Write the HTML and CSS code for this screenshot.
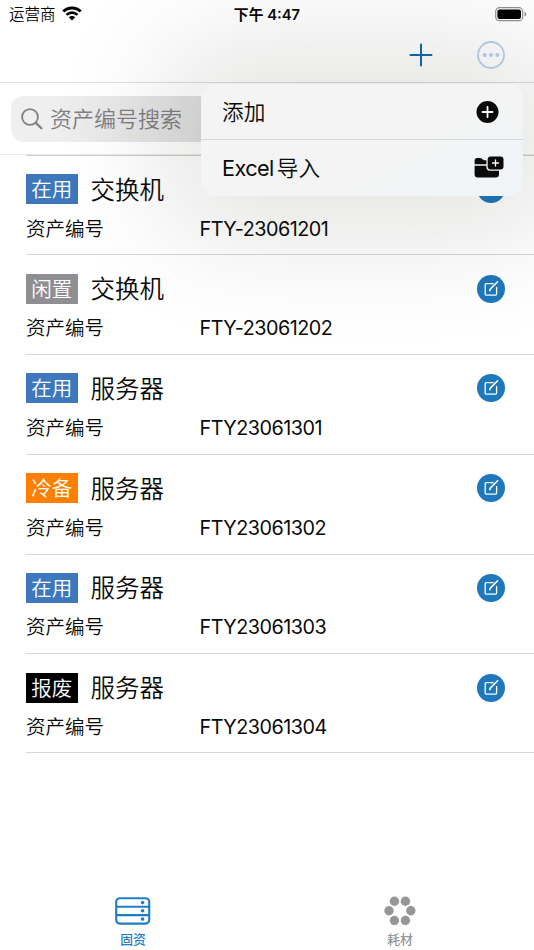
FILE: index.html
```html
<!DOCTYPE html>
<html lang="zh-CN">
<head>
    <meta charset="UTF-8">
    <meta name="viewport" content="width=device-width, initial-scale=1.0">
    <title>固资</title>
    <link rel="stylesheet" href="styles.css">
</head>
<body>
    <svg class="icon-defs" aria-hidden="true">
        <symbol id="icon-edit" viewBox="0 0 28 28">
            <circle cx="14" cy="14" r="14" fill="#1e78bb"/>
            <path d="M16.5 8.7H9.2a1 1 0 0 0-1 1v9.4a1 1 0 0 0 1 1h9.4a1 1 0 0 0 1-1V12" fill="none" stroke="#fff" stroke-width="1.3"/>
            <path d="M12.8 15.6l.6-1.6 7.2-7.2" fill="none" stroke="#fff" stroke-width="1.6" stroke-linecap="round"/>
        </symbol>
    </svg>

    <div class="screen">
        <header class="status-bar">
            <div class="carrier">
                <span>运营商</span>
                <svg class="wifi" viewBox="0 0 20 15">
                    <path d="M1.3 5.5a12.4 12.4 0 0 1 17.4 0" fill="none" stroke="#000" stroke-width="2.9"/>
                    <path d="M4.5 8.9a7.8 7.8 0 0 1 11 0" fill="none" stroke="#000" stroke-width="2.7"/>
                    <path d="M10 14.4l-3.1-3.1a4.4 4.4 0 0 1 6.2 0z"/>
                </svg>
            </div>
            <div class="time">下午 4:47</div>
            <svg class="battery" viewBox="0 0 32 15">
                <rect x=".7" y=".7" width="27" height="13" rx="3.8" fill="none" stroke="#929292" stroke-width="1.2"/>
                <rect x="2.4" y="2.4" width="23.6" height="9.6" rx="2.2"/>
                <path d="M29.5 4.8q1.8.7 1.8 2.4t-1.8 2.4z" fill="#929292"/>
            </svg>
        </header>

        <nav class="nav-bar">
            <button class="nav-button" aria-label="添加">
                <svg viewBox="0 0 28 28"><path d="M14 3.5v21M3.5 14h21" stroke="#1269ad" stroke-width="2" stroke-linecap="round"/></svg>
            </button>
            <button class="nav-button" aria-label="更多">
                <svg viewBox="0 0 28 28">
                    <circle cx="14" cy="14" r="13" fill="none" stroke="#bad2ee" stroke-width="1.8"/>
                    <g fill="#bad2ee"><circle cx="7.7" cy="14" r="2"/><circle cx="14" cy="14" r="2"/><circle cx="20.3" cy="14" r="2"/></g>
                </svg>
            </button>
        </nav>

        <div class="search-area">
            <div class="search-field">
                <svg viewBox="0 0 22 22"><circle cx="9" cy="9" r="7.9" fill="none" stroke="#808084" stroke-width="1.8"/><path d="M14.9 14.9l5.4 5.4" stroke="#808084" stroke-width="2.3" stroke-linecap="round"/></svg>
                <span>资产编号搜索</span>
            </div>
        </div>

        <main class="asset-list">
            <article class="asset">
                <div class="asset-head"><span class="tag in-use">在用</span><h2>交换机</h2><svg class="edit"><use href="#icon-edit"/></svg></div>
                <div class="asset-info"><span>资产编号</span><span class="code">FTY-23061201</span></div>
            </article>
            <article class="asset">
                <div class="asset-head"><span class="tag idle">闲置</span><h2>交换机</h2><svg class="edit"><use href="#icon-edit"/></svg></div>
                <div class="asset-info"><span>资产编号</span><span class="code">FTY-23061202</span></div>
            </article>
            <article class="asset">
                <div class="asset-head"><span class="tag in-use">在用</span><h2>服务器</h2><svg class="edit"><use href="#icon-edit"/></svg></div>
                <div class="asset-info"><span>资产编号</span><span class="code">FTY23061301</span></div>
            </article>
            <article class="asset">
                <div class="asset-head"><span class="tag standby">冷备</span><h2>服务器</h2><svg class="edit"><use href="#icon-edit"/></svg></div>
                <div class="asset-info"><span>资产编号</span><span class="code">FTY23061302</span></div>
            </article>
            <article class="asset">
                <div class="asset-head"><span class="tag in-use">在用</span><h2>服务器</h2><svg class="edit"><use href="#icon-edit"/></svg></div>
                <div class="asset-info"><span>资产编号</span><span class="code">FTY23061303</span></div>
            </article>
            <article class="asset">
                <div class="asset-head"><span class="tag scrapped">报废</span><h2>服务器</h2><svg class="edit"><use href="#icon-edit"/></svg></div>
                <div class="asset-info"><span>资产编号</span><span class="code">FTY23061304</span></div>
            </article>
        </main>

        <footer class="tab-bar">
            <div class="tab active">
                <svg viewBox="0 0 36 28">
                    <g fill="none" stroke="currentColor" stroke-width="2.1"><rect x="1.2" y="1.2" width="33" height="25.4" rx="3.5"/><path d="M1.2 9.7h33M1.2 18.1h33"/></g>
                    <g fill="currentColor"><circle cx="27.6" cy="5.6" r="1.8"/><circle cx="27.6" cy="13.8" r="1.8"/><circle cx="27.6" cy="22.1" r="1.8"/></g>
                </svg>
                <span>固资</span>
            </div>
            <div class="tab">
                <svg viewBox="0 0 36 28">
                    <g fill="currentColor"><circle cx="12.4" cy="4.2" r="4.7"/><circle cx="23.4" cy="4.2" r="4.7"/><circle cx="7" cy="13.8" r="4.7"/><circle cx="28.8" cy="13.8" r="4.7"/><circle cx="12.4" cy="23.5" r="4.7"/><circle cx="23.4" cy="23.5" r="4.7"/></g>
                </svg>
                <span>耗材</span>
            </div>
        </footer>

        <!-- Context menu -->
        <div class="menu">
            <div class="menu-item">
                <span>添加</span>
                <svg viewBox="0 0 30 24"><circle cx="13.5" cy="12" r="11" fill="#0a0a0a"/><path d="M13.5 7v10M8.5 12h10" stroke="#fff" stroke-width="1.8" stroke-linecap="round"/></svg>
            </div>
            <div class="menu-item">
                <span><span class="latin">Excel</span>导入</span>
                <svg viewBox="0 0 30 24">
                    <path d="M.6 8.3V4.6q0-2.6 2.6-2.6h2.7q1.2 0 2 .8l1.2 1q.5.4 1.3.4h2v4.1z" fill="#0a0a0a"/>
                    <path d="M.6 9.7h11.8v1.6q0 3.4 3.4 3.4h9.2v3.6q0 3.3-3.3 3.3H3.9q-3.3 0-3.3-3.3z" fill="#0a0a0a"/>
                    <rect x="13.7" y=".6" width="15.8" height="12.8" rx="3" fill="#0a0a0a"/>
                    <path d="M21.5 4v6M18.5 7h6" stroke="#fff" stroke-width="1.3" stroke-linecap="round"/>
                </svg>
            </div>
        </div>
    </div>
</body>
</html>
```
FILE: styles.css
```css
:root {
    --blue: #1e7dc4;
    --line: #dededf;
    --font-body: Inter, "Noto Sans CJK SC", sans-serif;
}
* { margin: 0; padding: 0; box-sizing: border-box; }
body { font-family: var(--font-body); font-weight: 350; background: #fff; color: #0a0a0a; }
.icon-defs { position: absolute; width: 0; height: 0; }
.screen { position: relative; width: 534px; height: 950px; overflow: hidden; display: flex; flex-direction: column; }

/* Status bar */
.status-bar {
    height: 28px; padding: 0 7px 0 9px; flex: none;
    display: grid; grid-template-columns: 1fr auto 1fr; align-items: center;
}
.carrier { display: flex; align-items: center; gap: 6px; font-size: 15.5px; line-height: 28px; }
.carrier span { padding-top: 1px; }
.wifi { width: 20px; height: 15px; margin-top: -2px; }
.time { font-size: 14.8px; font-weight: 600; line-height: 28px; padding-right: 2px; }
.battery { width: 32px; height: 15px; justify-self: end; margin-top: -1px; }

.nav-bar {
    height: 55px; flex: none; padding-right: 29px; border-bottom: 1px solid var(--line);
    display: flex; justify-content: flex-end; align-items: center; gap: 42px;
}
.nav-button { border: none; background: none; width: 28px; height: 28px; }
.nav-button svg { display: block; width: 28px; height: 28px; }

.search-area { height: 72px; flex: none; padding: 13px 11px; border-bottom: 1px solid #e9e9e9; }
.search-field {
    height: 46px; border-radius: 13px; background: linear-gradient(90deg, #efeff0 40px, #dfdfe0 190px); padding-left: 10px;
    display: flex; align-items: center; gap: 7px; color: #808084; font-size: 22px;
}
.search-field svg { width: 22px; height: 22px; }
.search-field span { line-height: 46px; height: 46px; }

/* Asset rows */
.asset-list { flex: 1; padding-left: 26px; }
.asset { height: 99.75px; border-top: 1px solid #d8d8d8; padding-top: 18.2px; }
.asset:first-child { height: 99.4px; border-top-color: #ccc; padding-top: 18px; }
.asset:last-child { height: 100px; border-bottom: 1px solid #d8d8d8; }
.asset-head { display: flex; align-items: center; height: 30px; padding-right: 29px; }
.tag { width: 51.5px; height: 30px; line-height: 31px; text-align: center; font-size: 20.5px; color: #fff; }
.in-use { background: #3c78bb; }
.idle { background: #8e8e93; }
.standby { background: #ff8000; }
.scrapped { background: #000; }
.asset h2 { margin-left: 13px; font-size: 24.5px; line-height: 30px; padding-top: 1px; font-weight: inherit; }
.edit { width: 28px; height: 28px; margin-left: auto; }
.asset-info { display: grid; grid-template-columns: 173.5px 1fr; height: 30px; margin-top: 9.5px; line-height: 30px; font-size: 19.5px; }
.code { font-size: 19.8px; font-weight: 400; letter-spacing: -.5px; }

.tab-bar { height: 62px; flex: none; display: grid; grid-template-columns: 266px 268px; }
.tab { display: flex; flex-direction: column; align-items: center; color: #969696; font-size: 12.8px; font-weight: 500; line-height: 18px; padding-top: 9px; }
.tab.active { color: var(--blue); }
.tab svg { width: 36px; height: 28px; overflow: visible; margin-bottom: 6px; }

/* Context menu floats over the nav bar and list */
.menu {
    position: absolute; top: 84px; left: 201px; width: 322px; height: 112px;
    border-radius: 16px; background: linear-gradient(150deg, #f4f4f4 60%, #eff4f8);
    box-shadow: 0 0 120px 36px rgba(20, 20, 10, .12);
}
.menu-item {
    height: 56px; padding: 0 19px 0 21px; font-size: 21.7px; line-height: 56px;
    display: flex; justify-content: space-between; align-items: center;
}
.menu-item + .menu-item { height: 57px; margin-top: -1px; border-top: 1px solid #d7d8d9; line-height: 58px; }
.menu-item svg { width: 30px; height: 24px; }
.latin { font-weight: 400; letter-spacing: -.6px; margin-right: 3px; }
```
